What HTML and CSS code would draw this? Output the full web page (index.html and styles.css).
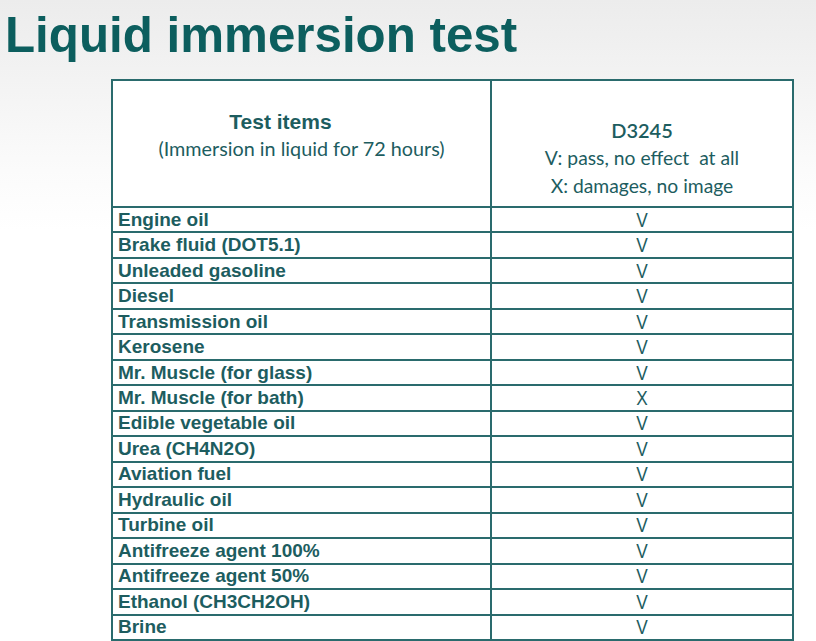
FILE: index.html
```html
<!DOCTYPE html>
<html>
<head>
<meta charset="utf-8">
<link rel="stylesheet" href="styles.css">
</head>
<body>
<div class="page">
  <h1 class="title">Liquid immersion test</h1>
  <table class="grid">
    <tr class="head">
      <th class="h-items"><div class="h-main">Test items</div><div class="h-sub">(Immersion in liquid for 72 hours)</div></th>
      <th class="h-res"><div class="h-code">D3245</div><div class="h-line">V: pass, no effect&nbsp; at all</div><div class="h-line">X: damages, no image</div></th>
    </tr>
    <tr><td class="item">Engine oil</td><td class="res"><span>V</span></td></tr>
    <tr><td class="item">Brake fluid (DOT5.1)</td><td class="res"><span>V</span></td></tr>
    <tr><td class="item">Unleaded gasoline</td><td class="res"><span>V</span></td></tr>
    <tr><td class="item">Diesel</td><td class="res"><span>V</span></td></tr>
    <tr><td class="item">Transmission oil</td><td class="res"><span>V</span></td></tr>
    <tr><td class="item">Kerosene</td><td class="res"><span>V</span></td></tr>
    <tr><td class="item">Mr. Muscle (for glass)</td><td class="res"><span>V</span></td></tr>
    <tr><td class="item">Mr. Muscle (for bath)</td><td class="res"><span>X</span></td></tr>
    <tr><td class="item">Edible vegetable oil</td><td class="res"><span>V</span></td></tr>
    <tr><td class="item">Urea (CH4N2O)</td><td class="res"><span>V</span></td></tr>
    <tr><td class="item">Aviation fuel</td><td class="res"><span>V</span></td></tr>
    <tr><td class="item">Hydraulic oil</td><td class="res"><span>V</span></td></tr>
    <tr><td class="item">Turbine oil</td><td class="res"><span>V</span></td></tr>
    <tr><td class="item">Antifreeze agent 100%</td><td class="res"><span>V</span></td></tr>
    <tr><td class="item">Antifreeze agent 50%</td><td class="res"><span>V</span></td></tr>
    <tr><td class="item">Ethanol (CH3CH2OH)</td><td class="res"><span>V</span></td></tr>
    <tr><td class="item">Brine</td><td class="res"><span>V</span></td></tr>
  </table>
</div>
</body>
</html>
```
FILE: styles.css
```css
html, body {
  margin: 0;
  padding: 0;
}
body {
  width: 816px;
  height: 641px;
  overflow: hidden;
  background: linear-gradient(180deg, #ececec 0px, #f3f3f3 80px, #fbfbfb 170px, #ffffff 230px);
  font-family: "Liberation Sans", Arial, sans-serif;
}
.title {
  margin: 0;
  padding: 9px 0 0 5px;
  height: 70px;
  box-sizing: border-box;
  font-size: 49.3px;
  line-height: 52px;
  font-weight: bold;
  color: #0c5e5e;
  white-space: nowrap;
}
.grid {
  margin: 9px 0 0 111px;
  border-collapse: collapse;
  background: #ffffff;
  color: #1d5d5f;
}
.grid th, .grid td {
  border: 2px solid #2a6b6d;
  padding: 0;
}
.head th {
  height: 125px;
  font-weight: normal;
  text-align: center;
  vertical-align: top;
}
.h-items {
  width: 377px;
}
.h-main {
  margin-top: 28px;
  font-weight: bold;
  font-size: 21px;
  line-height: 26px;
  padding-right: 42px;
}
.h-sub {
  font-family: Lato, "Open Sans", sans-serif;
  font-size: 19.8px;
  line-height: 26px;
}
.h-res {
  width: 300px;
  font-family: Lato, "Open Sans", sans-serif;
}
.h-code {
  margin-top: 35px;
  font-weight: 600;
  font-size: 20px;
  line-height: 28px;
}
.h-line {
  font-size: 19.3px;
  line-height: 28px;
}
.grid td {
  height: 23.47px;
}
.item {
  font-weight: bold;
  font-size: 19px;
  padding-left: 5px !important;
  line-height: 20px;
}
.res {
  text-align: center;
  font-size: 21px;
  line-height: 20px;
}
.res span {
  display: inline-block;
  transform: scaleX(0.82);
}
```
